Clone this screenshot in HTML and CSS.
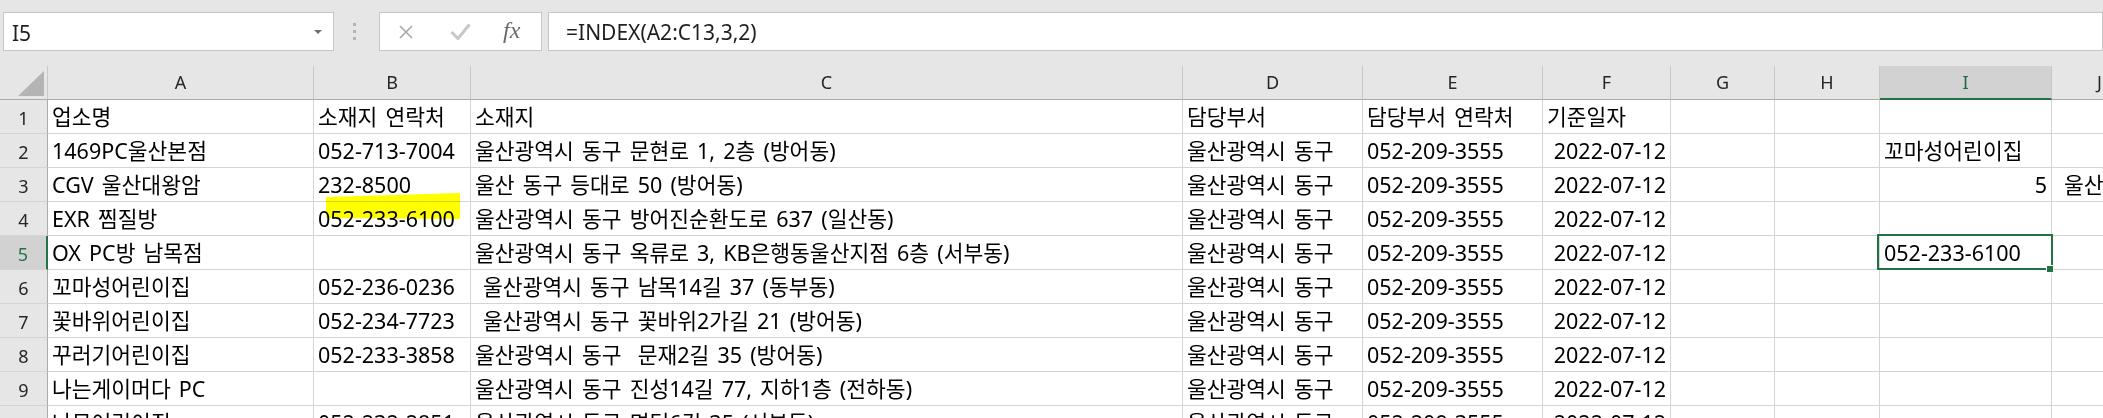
FILE: index.html
```html
<!DOCTYPE html>
<html lang="ko">
<head>
    <meta charset="UTF-8">
    <title>업소 목록 - Excel</title>
    <link rel="stylesheet" href="styles.css">
</head>
<body>
    <!-- name box + formula bar -->
    <div class="formula-row">
        <div class="name-box">
            <span class="name-text">I5</span>
            <span class="drop-arrow"></span>
        </div>
        <div class="grip"><i></i><i></i><i></i></div>
        <div class="fx-buttons">
            <svg class="icon-cancel" width="14" height="14" viewBox="0 0 14 14">
                <path d="M1 1L13 13M13 1L1 13" stroke="#a6a6a6" stroke-width="1.6" fill="none"/>
            </svg>
            <svg class="icon-enter" width="21" height="17" viewBox="0 0 21 17">
                <path d="M1.5 9L8 15.5L19.5 1.5" stroke="#c8c8c8" stroke-width="3" fill="none"/>
            </svg>
            <span class="fx">fx</span>
        </div>
        <div class="formula-input">=INDEX(A2:C13,3,2)</div>
    </div>

    <div class="sheet">
        <!-- column headers -->
        <div class="corner">
            <svg width="47" height="33" viewBox="0 0 47 33"><polygon points="18,30 44,30 44,5" fill="#b4b4b4"/></svg>
        </div>
        <div class="col-head">A</div>
        <div class="col-head">B</div>
        <div class="col-head">C</div>
        <div class="col-head">D</div>
        <div class="col-head">E</div>
        <div class="col-head">F</div>
        <div class="col-head">G</div>
        <div class="col-head">H</div>
        <div class="col-head selected">I</div>
        <div class="col-head">J</div>

        <!-- row 1 -->
        <div class="row-head">1</div>
        <div class="c">업소명</div>
        <div class="c">소재지 연락처</div>
        <div class="c">소재지</div>
        <div class="c">담당부서</div>
        <div class="c">담당부서 연락처</div>
        <div class="c">기준일자</div>
        <div class="c"></div>
        <div class="c"></div>
        <div class="c"></div>
        <div class="c"></div>

        <!-- row 2 -->
        <div class="row-head">2</div>
        <div class="c">1469PC울산본점</div>
        <div class="c">052-713-7004</div>
        <div class="c">울산광역시 동구 문현로 1, 2층 (방어동)</div>
        <div class="c">울산광역시 동구</div>
        <div class="c">052-209-3555</div>
        <div class="c num">2022-07-12</div>
        <div class="c"></div>
        <div class="c"></div>
        <div class="c">꼬마성어린이집</div>
        <div class="c"></div>

        <!-- row 3 -->
        <div class="row-head">3</div>
        <div class="c">CGV 울산대왕암</div>
        <div class="c">232-8500</div>
        <div class="c">울산 동구 등대로 50 (방어동)</div>
        <div class="c">울산광역시 동구</div>
        <div class="c">052-209-3555</div>
        <div class="c num">2022-07-12</div>
        <div class="c"></div>
        <div class="c"></div>
        <div class="c num">5</div>
        <div class="c"> 울산광역시 동구 남목14길 37 (동부동)</div>

        <!-- row 4 -->
        <div class="row-head">4</div>
        <div class="c">EXR 찜질방</div>
        <div class="c marked">052-233-6100<svg class="highlight" width="134" height="26" viewBox="0 0 134 26"><polygon points="0,4 134,0 134,26 0,25" fill="#ffff00"/></svg></div>
        <div class="c">울산광역시 동구 방어진순환도로 637 (일산동)</div>
        <div class="c">울산광역시 동구</div>
        <div class="c">052-209-3555</div>
        <div class="c num">2022-07-12</div>
        <div class="c"></div>
        <div class="c"></div>
        <div class="c"></div>
        <div class="c"></div>

        <!-- row 5 -->
        <div class="row-head selected">5</div>
        <div class="c">OX PC방 남목점</div>
        <div class="c"></div>
        <div class="c">울산광역시 동구 옥류로 3, KB은행동울산지점 6층 (서부동)</div>
        <div class="c">울산광역시 동구</div>
        <div class="c">052-209-3555</div>
        <div class="c num">2022-07-12</div>
        <div class="c"></div>
        <div class="c"></div>
        <div class="c active">052-233-6100<span class="fill-handle"></span></div>
        <div class="c"></div>

        <!-- row 6 -->
        <div class="row-head">6</div>
        <div class="c">꼬마성어린이집</div>
        <div class="c">052-236-0236</div>
        <div class="c"> 울산광역시 동구 남목14길 37 (동부동)</div>
        <div class="c">울산광역시 동구</div>
        <div class="c">052-209-3555</div>
        <div class="c num">2022-07-12</div>
        <div class="c"></div>
        <div class="c"></div>
        <div class="c"></div>
        <div class="c"></div>

        <!-- row 7 -->
        <div class="row-head">7</div>
        <div class="c">꽃바위어린이집</div>
        <div class="c">052-234-7723</div>
        <div class="c"> 울산광역시 동구 꽃바위2가길 21 (방어동)</div>
        <div class="c">울산광역시 동구</div>
        <div class="c">052-209-3555</div>
        <div class="c num">2022-07-12</div>
        <div class="c"></div>
        <div class="c"></div>
        <div class="c"></div>
        <div class="c"></div>

        <!-- row 8 -->
        <div class="row-head">8</div>
        <div class="c">꾸러기어린이집</div>
        <div class="c">052-233-3858</div>
        <div class="c">울산광역시 동구  문재2길 35 (방어동)</div>
        <div class="c">울산광역시 동구</div>
        <div class="c">052-209-3555</div>
        <div class="c num">2022-07-12</div>
        <div class="c"></div>
        <div class="c"></div>
        <div class="c"></div>
        <div class="c"></div>

        <!-- row 9 -->
        <div class="row-head">9</div>
        <div class="c">나는게이머다 PC</div>
        <div class="c"></div>
        <div class="c">울산광역시 동구 진성14길 77, 지하1층 (전하동)</div>
        <div class="c">울산광역시 동구</div>
        <div class="c">052-209-3555</div>
        <div class="c num">2022-07-12</div>
        <div class="c"></div>
        <div class="c"></div>
        <div class="c"></div>
        <div class="c"></div>

        <!-- row 10 (cut off by the window) -->
        <div class="row-head">10</div>
        <div class="c">나무어린이집</div>
        <div class="c">052-232-2851</div>
        <div class="c">울산광역시 동구 명덕6길 35 (서부동)</div>
        <div class="c">울산광역시 동구</div>
        <div class="c">052-209-3555</div>
        <div class="c num">2022-07-12</div>
        <div class="c"></div>
        <div class="c"></div>
        <div class="c"></div>
        <div class="c"></div>
    </div>
</body>
</html>
```

FILE: styles.css
```css
html, body {
    margin: 0;
    padding: 0;
    height: 418px;
    overflow: hidden;
    background-color: #ffffff;
}

body {
    font-family: 'Noto Sans', 'Noto Sans CJK KR', sans-serif;
}

/* Name box / formula bar */
.formula-row {
    display: flex;
    align-items: flex-start;
    height: 66px;
    padding-top: 12px;
    box-sizing: border-box;
    background-color: #e6e6e6;
}

.name-box {
    margin-left: 3px;
    width: 331px;
    height: 39px;
    box-sizing: border-box;
    border: 1px solid #c6c6c6;
    background-color: #ffffff;
    display: flex;
    align-items: center;
    justify-content: space-between;
    padding: 2px 11px 0 8px;
    font-size: 21px;
    color: #1f1f1f;
}

.drop-arrow {
    width: 0;
    height: 0;
    border-left: 4px solid transparent;
    border-right: 4px solid transparent;
    border-top: 4px solid #707070;
    margin-top: -2px;
}

.grip {
    display: flex;
    flex-direction: column;
    gap: 4px;
    margin: 11px 23px 0 19px;
}

.grip i {
    display: block;
    width: 3px;
    height: 3px;
    background-color: #b4b4b4;
}

.fx-buttons {
    width: 163px;
    height: 39px;
    box-sizing: border-box;
    border: 1px solid #c6c6c6;
    background-color: #ffffff;
    display: flex;
    align-items: center;
    padding-left: 19px;
}

.icon-cancel {
    margin-right: 37px;
}

.icon-enter {
    margin-right: 32px;
}

.fx {
    font-family: 'Liberation Serif', serif;
    font-style: italic;
    font-size: 24px;
    color: #6b6b6b;
    margin-top: -3px;
}

.formula-input {
    flex: 1;
    margin-left: 6px;
    height: 39px;
    box-sizing: border-box;
    border: 1px solid #c6c6c6;
    background-color: #ffffff;
    padding: 2px 0 0 17px;
    font-size: 21px;
    line-height: 34px;
    color: #1f1f1f;
}

/* Sheet grid */
.sheet {
    display: grid;
    grid-template-columns: 48px 266px 157px 712px 180px 180px 128px 104px 105px 172px 96px;
    grid-auto-rows: 34px;
    font-size: 21.5px;
    word-spacing: 2.5px;
}

.corner {
    background-color: #e6e6e6;
    border-right: 1px solid #c8c8c8;
    border-bottom: 1px solid #ababab;
}

.corner svg {
    display: block;
}

.col-head {
    background-color: #e6e6e6;
    border-right: 1px solid #c8c8c8;
    border-bottom: 1px solid #ababab;
    text-align: center;
    font-size: 18px;
    line-height: 33px;
    color: #262626;
}

.col-head.selected {
    background-color: #d2d2d2;
    border-bottom: 2px solid #217346;
    color: #1e6b41;
}

.row-head {
    background-color: #e6e6e6;
    border-right: 1px solid #ababab;
    border-bottom: 1px solid #d4d4d4;
    text-align: center;
    font-size: 18px;
    line-height: 33px;
    padding-top: 2px;
    color: #262626;
}

.row-head.selected {
    background-color: #d2d2d2;
    border-right: 2px solid #217346;
    color: #217346;
}

.c {
    border-right: 1px solid #d4d4d4;
    border-bottom: 1px solid #d4d4d4;
    padding: 0 3px 0 4px;
    line-height: 33px;
    white-space: pre;
    color: #000000;
}

.c.num {
    text-align: right;
    padding-right: 4px;
}

/* highlighter scribble over B4 */
.c.marked {
    position: relative;
}

.highlight {
    position: absolute;
    left: 12px;
    top: -9px;
    mix-blend-mode: multiply;
}

/* active cell I5 */
.c.active {
    position: relative;
}

.c.active::after {
    content: "";
    position: absolute;
    left: -3px;
    top: -2px;
    right: -2px;
    bottom: -1px;
    border: 2px solid #217346;
}

.fill-handle {
    position: absolute;
    right: -2px;
    bottom: -3px;
    width: 6px;
    height: 6px;
    background-color: #217346;
    box-shadow: 0 0 0 1px #ffffff;
    z-index: 1;
}
```
